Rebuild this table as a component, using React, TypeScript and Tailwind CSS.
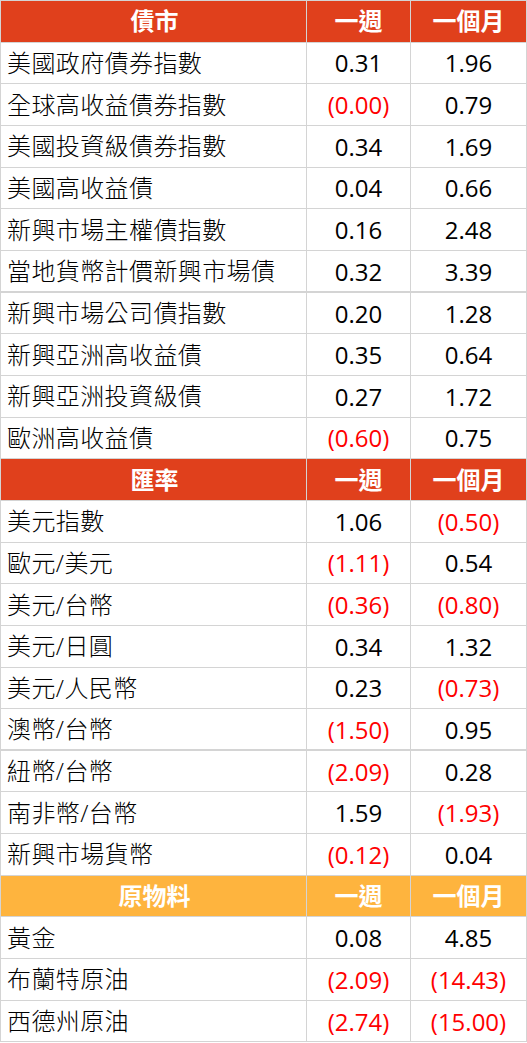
type Row = { name: string; w: string; m: string; thick?: boolean };
type Section = { title: string; tone: "red" | "orange"; rows: Row[] };

const sections: Section[] = [
  {
    title: "債市",
    tone: "red",
    rows: [
      { name: "美國政府債券指數", w: "0.31", m: "1.96" },
      { name: "全球高收益債券指數", w: "(0.00)", m: "0.79" },
      { name: "美國投資級債券指數", w: "0.34", m: "1.69" },
      { name: "美國高收益債", w: "0.04", m: "0.66" },
      { name: "新興市場主權債指數", w: "0.16", m: "2.48" },
      { name: "當地貨幣計價新興市場債", w: "0.32", m: "3.39", thick: true },
      { name: "新興市場公司債指數", w: "0.20", m: "1.28" },
      { name: "新興亞洲高收益債", w: "0.35", m: "0.64" },
      { name: "新興亞洲投資級債", w: "0.27", m: "1.72" },
      { name: "歐洲高收益債", w: "(0.60)", m: "0.75" },
    ],
  },
  {
    title: "匯率",
    tone: "red",
    rows: [
      { name: "美元指數", w: "1.06", m: "(0.50)" },
      { name: "歐元/美元", w: "(1.11)", m: "0.54" },
      { name: "美元/台幣", w: "(0.36)", m: "(0.80)" },
      { name: "美元/日圓", w: "0.34", m: "1.32" },
      { name: "美元/人民幣", w: "0.23", m: "(0.73)" },
      { name: "澳幣/台幣", w: "(1.50)", m: "0.95", thick: true },
      { name: "紐幣/台幣", w: "(2.09)", m: "0.28" },
      { name: "南非幣/台幣", w: "1.59", m: "(1.93)" },
      { name: "新興市場貨幣", w: "(0.12)", m: "0.04" },
    ],
  },
  {
    title: "原物料",
    tone: "orange",
    rows: [
      { name: "黃金", w: "0.08", m: "4.85" },
      { name: "布蘭特原油", w: "(2.09)", m: "(14.43)" },
      { name: "西德州原油", w: "(2.74)", m: "(15.00)" },
    ],
  },
];

const Num = ({ v }: { v: string }) => {
  const neg = v.startsWith("(");
  return (
    <td className={`border border-[#d4d4d4] text-center font-normal pt-[1px] ${neg ? "text-[#ff0000]" : "text-black"}`}>
      {v}
    </td>
  );
};

export default function App() {
  return (
    <div className="bg-white w-[527px] h-[1043px]">
      <table
        className="table-fixed border-collapse w-[526px] text-[24px] leading-none"
        style={{ fontFamily: '"Open Sans", "Noto Sans CJK TC", sans-serif' }}
      >
        <colgroup>
          <col className="w-[306px]" />
          <col className="w-[104px]" />
          <col className="w-[116px]" />
        </colgroup>
        <tbody>
          {sections.map((s) => (
            <Section key={s.title} s={s} />
          ))}
        </tbody>
      </table>
    </div>
  );
}

function Section({ s }: { s: Section }) {
  const bg = s.tone === "red" ? "bg-[#e0401c]" : "bg-[#feb43e]";
  return (
    <>
      <tr className={`h-[41.66px] ${bg} text-white font-bold`}>
        <td className="border border-[#d4d4d4] text-center pl-[2px]">{s.title}</td>
        <td className="border border-[#d4d4d4] text-center">一週</td>
        <td className="border border-[#d4d4d4] text-center">一個月</td>
      </tr>
      {s.rows.map((r) => (
        <tr
          key={r.name}
          className={`h-[41.66px] ${r.thick ? "border-b-2 border-b-[#d4d4d4]" : ""}`}
        >
          <td className="border border-[#d4d4d4] pl-[6px] text-black font-light tracking-[0.4px]">{r.name}</td>
          <Num v={r.w} />
          <Num v={r.m} />
        </tr>
      ))}
    </>
  );
}
